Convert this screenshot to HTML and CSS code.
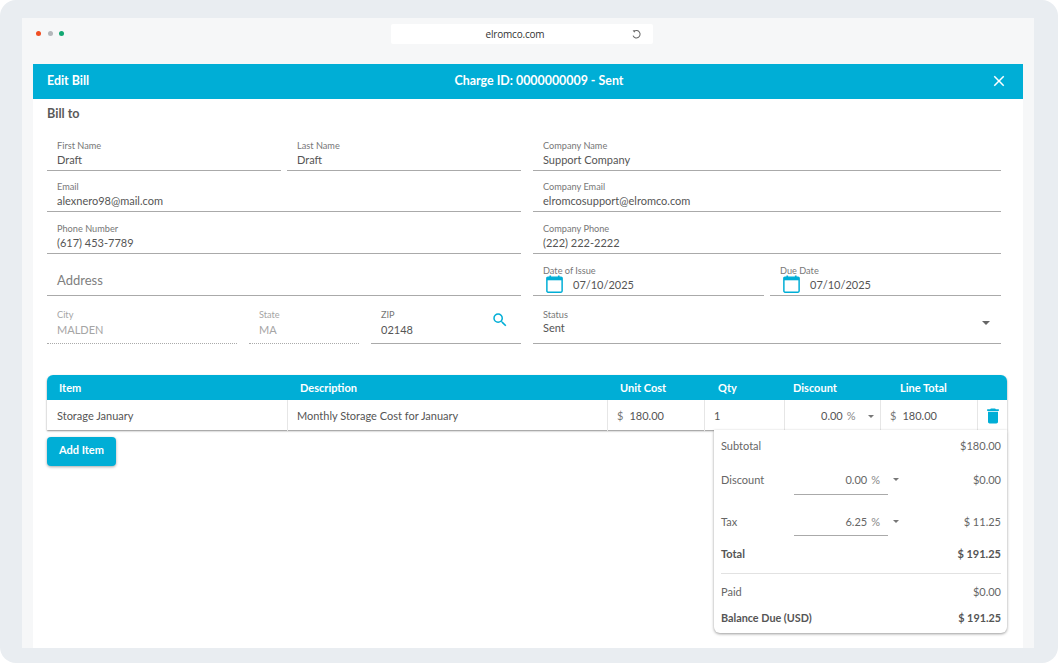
FILE: index.html
```html
<!DOCTYPE html>
<html lang="en">
<head>
    <meta charset="UTF-8">
    <title>Edit Bill</title>
    <link rel="stylesheet" href="styles.css">
</head>
<body>
<div class="frame">
    <div class="window">
        <!-- Browser bar -->
        <div class="browser-bar">
            <div class="dots">
                <span class="dot dot-red"></span>
                <span class="dot dot-grey"></span>
                <span class="dot dot-green"></span>
            </div>
            <div class="url-bar">
                <span class="url-text">elromco.com</span>
                <svg class="reload" viewBox="0 0 12 12"><path d="M3.4 2.6 A4 4 0 1 1 2.2 7.2" fill="none" stroke="#666" stroke-width="1.1"/><path d="M1.8 1.4 L4.6 1.6 L3.6 4.2 Z" fill="#666"/></svg>
            </div>
        </div>

        <div class="modal">
            <div class="modal-header">
                <span class="modal-title">Edit Bill</span>
                <span class="modal-charge">Charge ID: 0000000009 - Sent</span>
                <svg class="close" viewBox="0 0 24 24"><path d="M19 6.41L17.59 5 12 10.59 6.41 5 5 6.41 10.59 12 5 17.59 6.41 19 12 13.41 17.59 19 19 17.59 13.41 12z"/></svg>
            </div>

            <div class="modal-body">
                <h2 class="bill-to">Bill to</h2>

                <!-- Form -->
                <div class="form">
                    <div class="col">
                        <div class="row">
                            <div class="field"><label>First Name</label><span class="value">Draft</span></div>
                            <div class="field"><label>Last Name</label><span class="value">Draft</span></div>
                        </div>
                        <div class="row">
                            <div class="field"><label>Email</label><span class="value">alexnero98@mail.com</span></div>
                        </div>
                        <div class="row">
                            <div class="field"><label>Phone Number</label><span class="value">(617) 453-7789</span></div>
                        </div>
                        <div class="row">
                            <div class="field"><span class="placeholder">Address</span></div>
                        </div>
                        <div class="row row-tall">
                            <div class="field field-city disabled"><label>City</label><span class="value">MALDEN</span></div>
                            <div class="field field-state disabled"><label>State</label><span class="value">MA</span></div>
                            <div class="field field-zip">
                                <label>ZIP</label><span class="value">02148</span>
                                <svg class="search" viewBox="0 0 24 24"><path d="M15.5 14h-.79l-.28-.27A6.471 6.471 0 0 0 16 9.5 6.5 6.5 0 1 0 9.5 16c1.61 0 3.09-.59 4.23-1.57l.27.28v.79l5 4.99L20.49 19l-4.99-5zm-6 0C7.01 14 5 11.99 5 9.5S7.01 5 9.5 5 14 7.01 14 9.5 11.99 14 9.5 14z"/></svg>
                            </div>
                        </div>
                    </div>
                    <div class="col">
                        <div class="row">
                            <div class="field"><label>Company Name</label><span class="value">Support Company</span></div>
                        </div>
                        <div class="row">
                            <div class="field"><label>Company Email</label><span class="value">elromcosupport@elromco.com</span></div>
                        </div>
                        <div class="row">
                            <div class="field"><label>Company Phone</label><span class="value">(222) 222-2222</span></div>
                        </div>
                        <div class="row">
                            <div class="field field-date">
                                <label>Date of Issue</label>
                                <span class="value">
                                    <svg class="calendar" viewBox="0 0 16 17"><path d="M4 0.5v3M12 0.5v3" stroke="#00aed6" stroke-width="1.6"/><rect x="0.8" y="2" width="14.4" height="14.2" rx="1" fill="none" stroke="#00aed6" stroke-width="1.4"/><rect x="0.8" y="2" width="14.4" height="3" fill="#00aed6"/></svg>
                                    07/10/2025
                                </span>
                            </div>
                            <div class="field field-date">
                                <label>Due Date</label>
                                <span class="value">
                                    <svg class="calendar" viewBox="0 0 16 17"><path d="M4 0.5v3M12 0.5v3" stroke="#00aed6" stroke-width="1.6"/><rect x="0.8" y="2" width="14.4" height="14.2" rx="1" fill="none" stroke="#00aed6" stroke-width="1.4"/><rect x="0.8" y="2" width="14.4" height="3" fill="#00aed6"/></svg>
                                    07/10/2025
                                </span>
                            </div>
                        </div>
                        <div class="row row-tall">
                            <div class="field field-status">
                                <label>Status</label><span class="value">Sent</span>
                                <span class="caret caret-big"></span>
                            </div>
                        </div>
                    </div>
                </div>

                <!-- Items table -->
                <div class="items">
                    <div class="items-head">
                        <span>Item</span>
                        <span>Description</span>
                        <span>Unit Cost</span>
                        <span>Qty</span>
                        <span>Discount</span>
                        <span>Line Total</span>
                        <span></span>
                    </div>
                    <div class="items-row">
                        <div class="cell">Storage January</div>
                        <div class="cell">Monthly Storage Cost for January</div>
                        <div class="cell"><span class="unit">$</span>180.00</div>
                        <div class="cell">1</div>
                        <div class="cell cell-discount">0.00<span class="pct">%</span><span class="caret"></span></div>
                        <div class="cell"><span class="unit">$</span>180.00</div>
                        <div class="cell cell-delete">
                            <svg class="trash" viewBox="0 0 24 24"><path d="M6 19c0 1.1.9 2 2 2h8c1.1 0 2-.9 2-2V7H6v12zM19 4h-3.5l-1-1h-5l-1 1H5v2h14V4z"/></svg>
                        </div>
                    </div>
                </div>

                <div class="below">
                    <button class="add-item">Add Item</button>

                    <!-- Totals -->
                    <div class="totals">
                        <div class="line line-subtotal"><span>Subtotal</span><span>$180.00</span></div>
                        <div class="line line-discount">
                            <span class="line-name">Discount</span>
                            <span class="rate">0.00<span class="pct">%</span></span>
                            <span class="caret"></span>
                            <span class="line-amount">$0.00</span>
                        </div>
                        <div class="line line-tax">
                            <span class="line-name">Tax</span>
                            <span class="rate">6.25<span class="pct">%</span></span>
                            <span class="caret"></span>
                            <span class="line-amount">$ 11.25</span>
                        </div>
                        <div class="line line-total"><span>Total</span><span>$ 191.25</span></div>
                        <div class="line line-paid"><span>Paid</span><span>$0.00</span></div>
                        <div class="line line-balance"><span>Balance Due (USD)</span><span>$ 191.25</span></div>
                    </div>
                </div>
            </div>
        </div>
    </div>
</div>
</body>
</html>
```

FILE: styles.css
```css
* {
    box-sizing: border-box;
}

body {
    margin: 0;
    background-color: #fff;
    font-family: Lato, "Liberation Sans", sans-serif;
    color: #555;
}

.frame {
    width: 1058px;
    height: 663px;
    padding: 18px 24px 15px 22px;
    background-color: #e9edf1;
    border-radius: 16px;
    overflow: hidden;
}

.window {
    height: 100%;
    padding: 0 11px;
    background-color: #f6f7f8;
    display: flex;
    flex-direction: column;
}

/* Browser bar */
.browser-bar {
    height: 46px;
    flex-shrink: 0;
    display: flex;
    align-items: flex-start;
    position: relative;
}

.dots {
    display: flex;
    gap: 6.5px;
    margin: 13px 0 0 3px;
}

.dot {
    width: 5px;
    height: 5px;
    border-radius: 50%;
}

.dot-red { background-color: #f04e23; }
.dot-grey { background-color: #b4b7bb; }
.dot-green { background-color: #12a873; }

.url-bar {
    width: 262px;
    height: 20px;
    margin: 6px 0 0 327px;
    background-color: #fff;
    border-radius: 2px;
    position: relative;
    text-align: center;
    font-family: "Open Sans", sans-serif;
    font-size: 10px;
    line-height: 20px;
    letter-spacing: -0.2px;
    color: #333;
}

.url-text {
    margin-right: 14px;
}

.reload {
    position: absolute;
    right: 11px;
    top: 5px;
    width: 11px;
    height: 11px;
}

/* Modal */
.modal {
    flex: 1;
    background-color: #fff;
    display: flex;
    flex-direction: column;
}

.modal-header {
    height: 35px;
    flex-shrink: 0;
    padding: 0 14px 3px;
    background-color: #00aed6;
    color: #fff;
    font-size: 12.4px;
    font-weight: 700;
    display: flex;
    align-items: center;
    position: relative;
}

.modal-charge {
    position: absolute;
    left: 0;
    right: 0;
    text-align: center;
    pointer-events: none;
    padding-left: 22px;
}

.close {
    width: 18px;
    height: 18px;
    margin-left: auto;
    margin-right: 1px;
    margin-top: 1px;
    fill: #fff;
}

.modal-body {
    padding: 0 16px 0 14px;
}

.bill-to {
    margin: 0;
    padding-top: 8px;
    height: 31px;
    font-size: 12.6px;
    line-height: 14px;
    font-weight: 700;
    color: #5a5a5a;
}

/* Form */
.form {
    display: flex;
    gap: 12px;
    padding-right: 6px;
}

.col {
    width: 474px;
}

.col + .col {
    width: 468px;
}

.row {
    height: 41px;
    display: flex;
    gap: 6px;
}

.row:nth-child(3),
.row:nth-child(4) {
    height: 42px;
}

.row-tall {
    height: 48px;
}

.field {
    flex: 1;
    min-width: 0;
    padding: 0 0 3px 10px;
    border-bottom: 1px solid #aaa;
    display: flex;
    flex-direction: column;
    justify-content: flex-end;
    position: relative;
}

.field label {
    font-size: 9.2px;
    line-height: 12px;
    color: #777;
}

.value {
    font-size: 11px;
    line-height: 15px;
    color: #555;
}

.placeholder {
    font-size: 13px;
    line-height: 20px;
    color: #808080;
    padding-bottom: 2px;
}

.field-city {
    flex: none;
    width: 190px;
    margin-right: 6px;
}

.field-state {
    flex: none;
    width: 110px;
    margin-right: 6px;
}

.field-zip {
    flex: none;
    width: 150px;
}

.field-city,
.field-state {
    border-bottom: 1px dotted #aaa;
}

.disabled label,
.disabled .value {
    color: #a5a5a5;
}

.row-tall .field {
    padding-bottom: 6px;
}

.row-tall .field label {
    margin-bottom: 1px;
}

.search {
    position: absolute;
    right: 12px;
    top: 15px;
    width: 18px;
    height: 18px;
    fill: #00aed6;
}

.field-date .value {
    padding-left: 30px;
    position: relative;
}

.calendar {
    position: absolute;
    left: 3px;
    top: -2px;
    width: 17px;
    height: 18px;
}

.row-tall .field-status {
    padding-bottom: 8px;
}

.row-tall .field-status label {
    margin-bottom: -1px;
}

.caret {
    width: 0;
    height: 0;
    border-left: 3px solid transparent;
    border-right: 3px solid transparent;
    border-top: 3px solid #777;
}

.caret-big {
    position: absolute;
    right: 11px;
    top: 25px;
    border-left-width: 4px;
    border-right-width: 4px;
    border-top-width: 4px;
    border-top-color: #666;
}

/* Items table */
.items {
    margin-top: 31px;
    width: 960px;
    border-radius: 6px 6px 0 0;
    box-shadow: 0 1px 2px rgba(0, 0, 0, 0.45);
}

.items-head,
.items-row {
    display: grid;
    grid-template-columns: 240px 320px 97px 80px 96px 97px 30px;
}

.items-head {
    height: 25px;
    background-color: #00aed6;
    border-radius: 6px 6px 0 0;
    color: #fff;
    font-size: 11px;
    font-weight: 700;
    line-height: 25px;
}

.items-head span {
    padding-left: 12px;
}

.items-head span:nth-child(2) { padding-left: 13px; }
.items-head span:nth-child(3) { padding-left: 13px; }
.items-head span:nth-child(4) { padding-left: 14px; }
.items-head span:nth-child(5) { padding-left: 9px; }
.items-head span:nth-child(6) { padding-left: 20px; }

.items-row {
    height: 30px;
    background-color: #fff;
}

.cell {
    padding: 1px 0 0 9px;
    border-left: 1px solid #e6e6e6;
    font-size: 11px;
    line-height: 30px;
    color: #555;
    display: flex;
    align-items: center;
}

.cell:first-child {
    border-left: none;
    padding-left: 10px;
}

.unit {
    margin-right: 6px;
    color: #777;
}

.pct {
    margin-left: 4px;
    color: #888;
}

.cell-discount {
    padding-left: 36px;
}

.cell-discount .caret {
    margin-left: 12px;
}

.cell-delete {
    padding: 0;
    justify-content: center;
}

.trash {
    width: 20px;
    height: 20px;
    fill: #00aed6;
}

.below {
    display: flex;
    justify-content: space-between;
    align-items: flex-start;
    width: 960px;
}

.add-item {
    width: 69px;
    height: 29px;
    margin-top: 7px;
    padding: 0 0 4px;
    border: none;
    border-radius: 4px;
    background-color: #00aed6;
    color: #fff;
    font-family: inherit;
    font-size: 11px;
    font-weight: 700;
    box-shadow: 0 1px 3px rgba(0, 0, 0, 0.35);
}

/* Totals */
.totals {
    width: 293px;
    height: 203px;
    padding: 0 6px 0 7px;
    background-color: #fff;
    border-radius: 0 0 6px 6px;
    box-shadow: 0 1px 3px rgba(0, 0, 0, 0.4);
    font-size: 11px;
    color: #666;
}

.line {
    display: flex;
    justify-content: space-between;
    align-items: center;
    padding-bottom: 2px;
}

.line-subtotal {
    height: 32px;
}

.line-discount,
.line-tax {
    justify-content: flex-start;
}

.line-discount {
    height: 36px;
}

.line-tax {
    height: 48px;
}

.line-name {
    width: 73px;
}

.rate {
    width: 94px;
    align-self: flex-start;
    padding-right: 8px;
    border-bottom: 1px solid #aaa;
    display: flex;
    justify-content: flex-end;
    align-items: center;
}

.line-discount .rate {
    height: 33px;
    padding-top: 3px;
}

.line-tax .rate {
    height: 38px;
    padding-top: 10px;
}

.line .caret {
    margin-left: 5px;
}

.line-amount {
    margin-left: auto;
}

.line-total {
    height: 16px;
    font-weight: 700;
    color: #555;
}

.line-paid {
    height: 38px;
    margin-top: 11px;
    border-top: 1px solid #e2e2e2;
}

.line-balance {
    height: 14px;
    font-size: 10.8px;
    font-weight: 700;
    color: #555;
}
```
